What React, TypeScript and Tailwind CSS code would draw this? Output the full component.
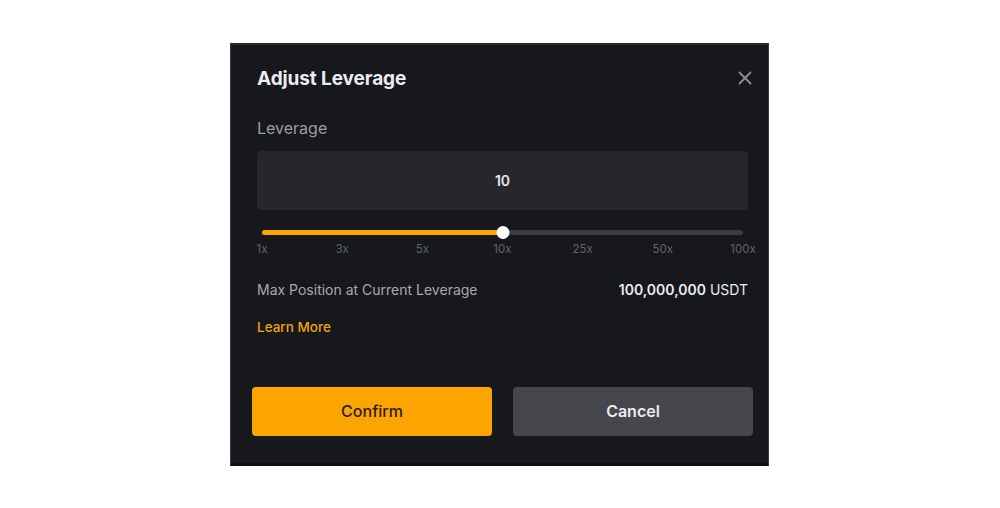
import { X } from "lucide-react";

const MARKS = ["1x", "3x", "5x", "10x", "25x", "50x", "100x"];

function LeverageSlider({ percent }: { percent: number }) {
  return (
    <div className="mt-[16px]">
      <div className="relative mx-[5px] h-[14px] flex items-center">
        <div className="h-[5px] w-full rounded-full bg-[#3a3c42]">
          <div
            className="h-full rounded-full bg-[#fca400]"
            style={{ width: `${percent}%` }}
          />
        </div>
        <div
          className="absolute top-[0.5px] h-[13px] w-[13px] -translate-x-1/2 rounded-full bg-white"
          style={{ left: `${percent}%` }}
        />
      </div>
      <div className="mx-[5px] mt-[2px] flex justify-between">
        {MARKS.map((m) => (
          <div key={m} className="flex w-0 justify-center">
            <span className="whitespace-nowrap text-[11.5px] leading-[14px] text-[#60636b]">
              {m}
            </span>
          </div>
        ))}
      </div>
    </div>
  );
}

export default function App() {
  return (
    <div
      className="flex h-[508px] w-full items-center justify-center bg-white pr-[1px]"
      style={{ fontFamily: "Inter, 'Noto Sans', sans-serif" }}
    >
      <div className="flex h-[423px] w-[539px] flex-col border-x border-[#3a3b40] border-t-2 border-t-[#2a2b31] bg-[#17181c] pl-[26px] pr-[20px]">
        {/* 標題列 */}
        <div className="mt-[22px] flex h-[25px] items-center justify-between">
          <h2 className="text-[19px] font-bold tracking-[-0.1px] text-[#eaecef]">
            Adjust Leverage
          </h2>
          <button className="-mr-[8px] -mt-[2px] text-[#8a8d93]">
            <X size={22} strokeWidth={2} />
          </button>
        </div>

        <p className="mt-[26px] text-[16px] leading-[20px] text-[#9a9da3]">Leverage</p>

        <div className="mt-[13px] flex h-[59px] items-center justify-center rounded-[4px] bg-[#25272d]">
          <span className="text-[14px] font-semibold text-[#e6e8ea]">10</span>
        </div>

        <LeverageSlider percent={50} />

        <div className="mt-[25px] flex items-center justify-between text-[14px] leading-[18px]">
          <span className="text-[#a6a9ae]">Max Position at Current Leverage</span>
          <span className="text-[#eaecef]">
            <span className="font-semibold">100,000,000</span> USDT
          </span>
        </div>

        <a className="mt-[19px] text-[13.5px] font-medium leading-[18px] text-[#f0a30a]">
          Learn More
        </a>

        <div className="mx-[-5px] mt-[51px] flex gap-[21px]">
          <button className="h-[49px] flex-1 rounded-[4px] bg-[#fca400] text-[16px] font-medium text-[#2a2013]">
            Confirm
          </button>
          <button className="h-[49px] flex-1 rounded-[4px] bg-[#45474c] text-[16px] font-semibold text-[#eaecef]">
            Cancel
          </button>
        </div>

        <div className="mt-auto -ml-[26px] -mr-[20px] h-[3px] bg-[#0e0e11]" />
      </div>
    </div>
  );
}
